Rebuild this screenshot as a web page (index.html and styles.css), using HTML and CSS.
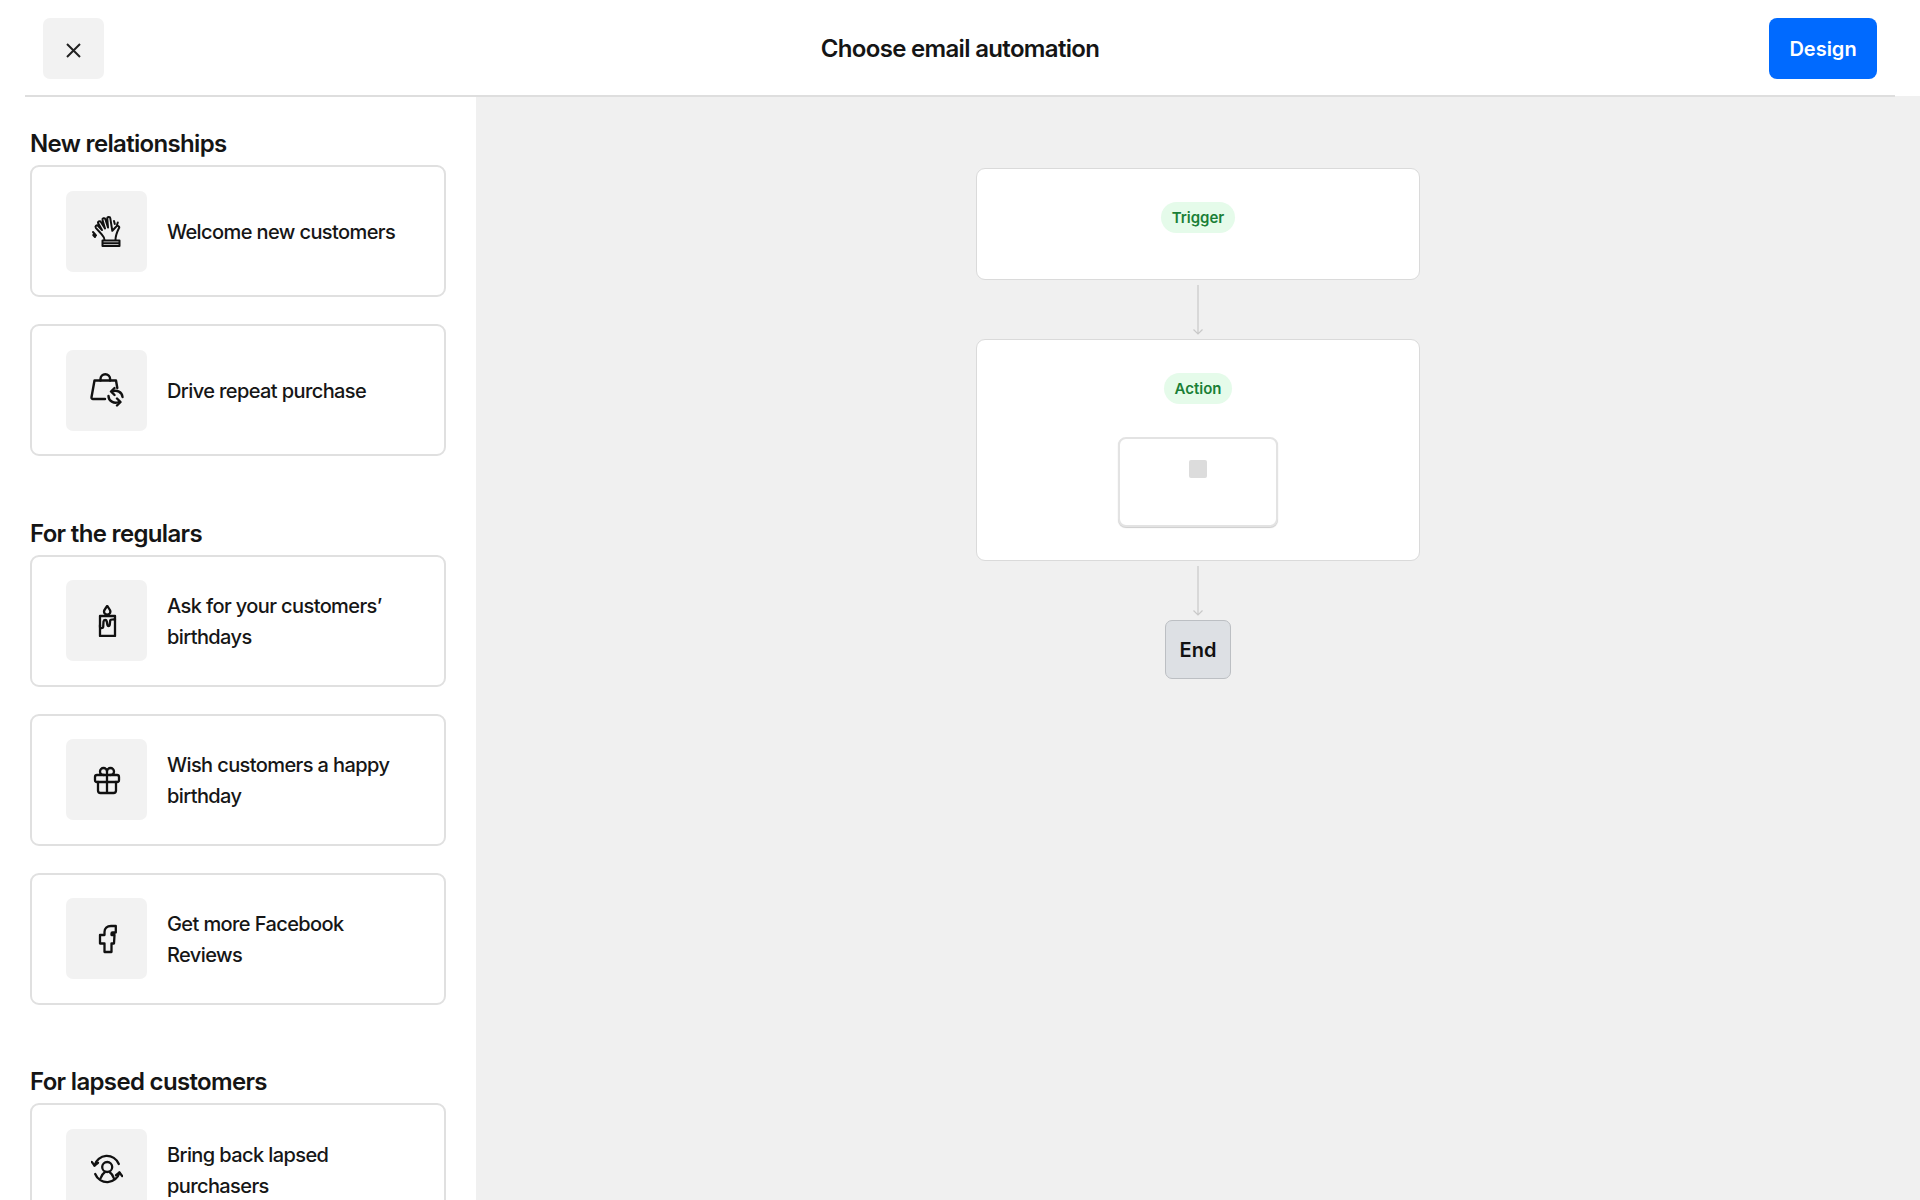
FILE: index.html
```html
<!DOCTYPE html>
<html lang="en">
<head>
<meta charset="utf-8">
<title>Choose email automation</title>
<link rel="stylesheet" href="styles.css">
</head>
<body>
<div class="page">
  <header class="topbar">
    <div class="topbar-start">
      <button class="close-btn" aria-label="Close">
        <svg class="close-icon" viewBox="0 0 15 15"><path d="M1 1l13 13M14 1L1 14"/></svg>
      </button>
    </div>
    <h1 class="title">Choose email automation</h1>
    <div class="topbar-end"><button class="design-btn">Design</button></div>
  </header>
  <main class="content">
    <aside class="sidebar">
      <section class="group">
        <h2 class="group-title">New relationships</h2>
        <div class="card-list">
          <div class="card">
            <div class="icon-box">
              <svg class="icon icon-fine" viewBox="0 0 32 32"><path d="M13.500 25C13.500 22 11.500 20.500 9.500 18L4.800 12.800A1.500 1.500 0 0 1 7 10.800L11 15L7.300 8.500A1.500 1.500 0 0 1 9.900 7L14 13.500L11.500 5A1.500 1.500 0 0 1 14.300 4L17 12.500L16.300 3.500A1.500 1.500 0 0 1 19.300 3.300L21.300 15.800L25.300 11.500A1.600 1.600 0 0 1 27.800 13.500C26 17 24.500 20 24.500 25"/><path d="M11.500 25.500h17V31h-17zM11.500 28.200h17"/><path d="M2 17l3 3.500M4 22l-1.800-2M23 6l.8 3M26.800 7.500L26 10"/></svg>
            </div>
            <span class="card-text">Welcome new customers</span>
          </div>
          <div class="card">
            <div class="icon-box">
              <svg class="icon icon-lg" viewBox="0 0 34 34"><path d="M15 26H3c-1 0-1.700-.8-1.500-1.800L4.500 7.500H26L27.300 15"/><path d="M10.500 7.500V6a4.800 4.800 0 0 1 9.600 0v1.500"/><path d="M32.500 24C32 19 27 16.500 22 18.500"/><path d="M18.500 23C18.500 28 24 31 29 29"/><path d="M24.500 15l-3.500 3.500 3.500 3.500M27 25.500l3.500 3.500-3.500 3.500"/></svg>
            </div>
            <span class="card-text">Drive repeat purchase</span>
          </div>
        </div>
      </section>
      <section class="group">
        <h2 class="group-title">For the regulars</h2>
        <div class="card-list">
          <div class="card">
            <div class="icon-box">
              <svg class="icon" viewBox="0 0 32 32"><path d="M16.200 1C14.500 3.500 13 5 13 6.500a3.200 3.200 0 0 0 6.400 0C19.400 5 18 3.500 16.200 1z"/><path d="M9 11h15v20H9z"/><path d="M9 20v2c0 1.500 3 1.500 3.200 0l.3-5.500c.2-2 3-2 3.300 0l.6 3.500c.3 1.300 2 1.300 2.300 0l.5-4.500c.3-1 1.500-1.200 4.800-1"/></svg>
            </div>
            <span class="card-text">Ask for your customers’ birthdays</span>
          </div>
          <div class="card">
            <div class="icon-box">
              <svg class="icon" viewBox="0 0 32 32"><path d="M6 11h20a2 2 0 0 1 2 2v3a2 2 0 0 1-2 2H6a2 2 0 0 1-2-2v-3a2 2 0 0 1 2-2z"/><path d="M7 18v8.500A2.500 2.500 0 0 0 9.500 29h13a2.500 2.500 0 0 0 2.500-2.500V18M16 11v18"/><path d="M16 11V7.500a3.500 3.500 0 0 0-7 0c0 2 1.500 3.500 4 3.500M16 11V7.500a3.500 3.500 0 0 1 7 0c0 2-1.500 3.500-4 3.500"/></svg>
            </div>
            <span class="card-text">Wish customers a happy birthday</span>
          </div>
          <div class="card">
            <div class="icon-box">
              <svg class="icon" viewBox="0 0 32 32"><path d="M13.500 29h7v-8.500h2.500l.5-8.500h-3v-1.500c0-.8.5-1 1-1h3.300V3H20c-4 0-6.500 2.500-6.500 6v3H9v8.500h4.500z"/></svg>
            </div>
            <span class="card-text">Get more Facebook Reviews</span>
          </div>
        </div>
      </section>
      <section class="group">
        <h2 class="group-title">For lapsed customers</h2>
        <div class="card-list">
          <div class="card">
            <div class="icon-box">
              <svg class="icon" viewBox="0 0 32 32"><path d="M3.500 12.500A12.800 12.800 0 0 1 27.800 11"/><path d="M28.500 19.500A12.800 12.800 0 0 1 4.200 21"/><path d="M.8 9l2.700 3.500L7 9.800M25 22.200l3.500-2.700 2.700 3.500"/><circle cx="16.200" cy="14" r="5"/><path d="M9.500 25.500c1-3 2.700-5.300 4.500-6.500M23 25.500c-1-3-2.700-5.300-4.500-6.500"/></svg>
            </div>
            <span class="card-text">Bring back lapsed purchasers</span>
          </div>
        </div>
      </section>
    </aside>
    <section class="canvas">
      <div class="node">
        <span class="badge">Trigger</span>
      </div>
      <svg class="arrow" viewBox="0 0 14 50"><path d="M7 0v49M2.500 44.500L7 49l4.500-4.500"/></svg>
      <div class="node node-action">
        <span class="badge">Action</span>
        <div class="step"><span class="step-thumb"></span></div>
      </div>
      <svg class="arrow" viewBox="0 0 14 50"><path d="M7 0v49M2.500 44.500L7 49l4.500-4.500"/></svg>
      <div class="end">End</div>
    </section>
  </main>
</div>
</body>
</html>
```
FILE: styles.css
```css
* { box-sizing: border-box; }
html, body { margin: 0; padding: 0; height: 100%; }
body {
  font-family: Inter, "Liberation Sans", sans-serif;
  color: #111;
  background: #fff;
  overflow: hidden;
}
.page { display: flex; flex-direction: column; height: 1200px; }
.topbar {
  position: relative;
  flex: none;
  height: 97px;
  margin: 0 25px;
  padding: 18px 18px 0;
  display: grid;
  grid-template-columns: 1fr auto 1fr;
  align-items: start;
  border-bottom: 2px solid #dedede;
}
.topbar-end { display: flex; justify-content: flex-end; }
.close-btn {
  width: 61px;
  height: 61px;
  border: 0;
  border-radius: 7px;
  background: #f2f2f2;
  display: flex;
  align-items: center;
  justify-content: center;
  padding: 4px 0 0;
}
.close-icon { width: 15px; height: 15px; fill: none; stroke: #222; stroke-width: 2; }
.title {
  margin: 0;
  font-size: 24px;
  line-height: 62px;
  font-weight: 600;
  letter-spacing: -0.67px;
  color: #151515;
}
.design-btn {
  width: 108px;
  height: 61px;
  border: 0;
  border-radius: 8px;
  background: #006aff;
  color: #fff;
  font: 600 20px Inter, "Liberation Sans", sans-serif;
}
.content { flex: 1; display: flex; min-height: 0; margin-top: -1px; }
.sidebar {
  flex: none;
  width: 476px;
  padding: 32px 30px 0;
  background: #fff;
  overflow: hidden;
}
.group { margin-bottom: 61.5px; }
.group-title {
  margin: 0 0 5px;
  font-size: 24px;
  line-height: 32px;
  font-weight: 600;
  letter-spacing: -0.67px;
  color: #151515;
}
.card-list { display: flex; flex-direction: column; gap: 27px; }
.card {
  height: 132px;
  width: 416px;
  flex: none;
  padding: 0 34px;
  display: flex;
  align-items: center;
  gap: 20px;
  border: 2px solid #e0e0e0;
  border-radius: 9px;
  background: #fff;
}
.icon-box {
  flex: none;
  width: 81px;
  height: 81px;
  border-radius: 7px;
  background: #f2f2f2;
  display: flex;
  align-items: center;
  justify-content: center;
}
.icon {
  width: 32px;
  height: 32px;
  fill: none;
  stroke: #111;
  stroke-width: 2.3;
  stroke-linecap: round;
  stroke-linejoin: round;
}
.icon-lg { width: 34px; height: 34px; stroke-width: 2.4; }
.icon-fine { stroke-width: 2; }
.card-text {
  padding-top: 3px;
  font-size: 20px;
  line-height: 31px;
  font-weight: 500;
  letter-spacing: -0.6px;
  color: #161616;
}
.canvas {
  flex: 1;
  background: #f0f0f0;
  padding-top: 72px;
  display: flex;
  flex-direction: column;
  align-items: center;
}
.node {
  flex: none;
  width: 444px;
  height: 112px;
  padding-top: 33px;
  display: flex;
  flex-direction: column;
  align-items: center;
  background: #fff;
  border: 1.5px solid #dadada;
  border-radius: 9px;
}
.node-action { height: 222px; }
.badge {
  height: 31px;
  padding: 0 11px;
  display: flex;
  align-items: center;
  border-radius: 16px;
  background: #e5fbea;
  color: #1a7f37;
  font-size: 15px;
  font-weight: 600;
}
.step {
  width: 160px;
  height: 90px;
  margin-top: 33px;
  padding-top: 21px;
  display: flex;
  justify-content: center;
  border: 2px solid #e3e3e3;
  border-radius: 8px;
  background: #fff;
  box-shadow: 0 1px 1px rgba(0, 0, 0, 0.2);
}
.step-thumb { width: 18px; height: 18px; border-radius: 2px; background: #dcdcdc; }
.arrow {
  flex: none;
  width: 14px;
  height: 50px;
  margin: 5px 0 4px;
  fill: none;
  stroke: #c9c9c9;
  stroke-width: 1.2;
}
.end {
  flex: none;
  width: 66px;
  height: 59px;
  display: flex;
  align-items: center;
  justify-content: center;
  border: 1.5px solid #bcbfc3;
  border-radius: 7px;
  background: #dde0e4;
  font-size: 20px;
  font-weight: 600;
  color: #111;
}
```
